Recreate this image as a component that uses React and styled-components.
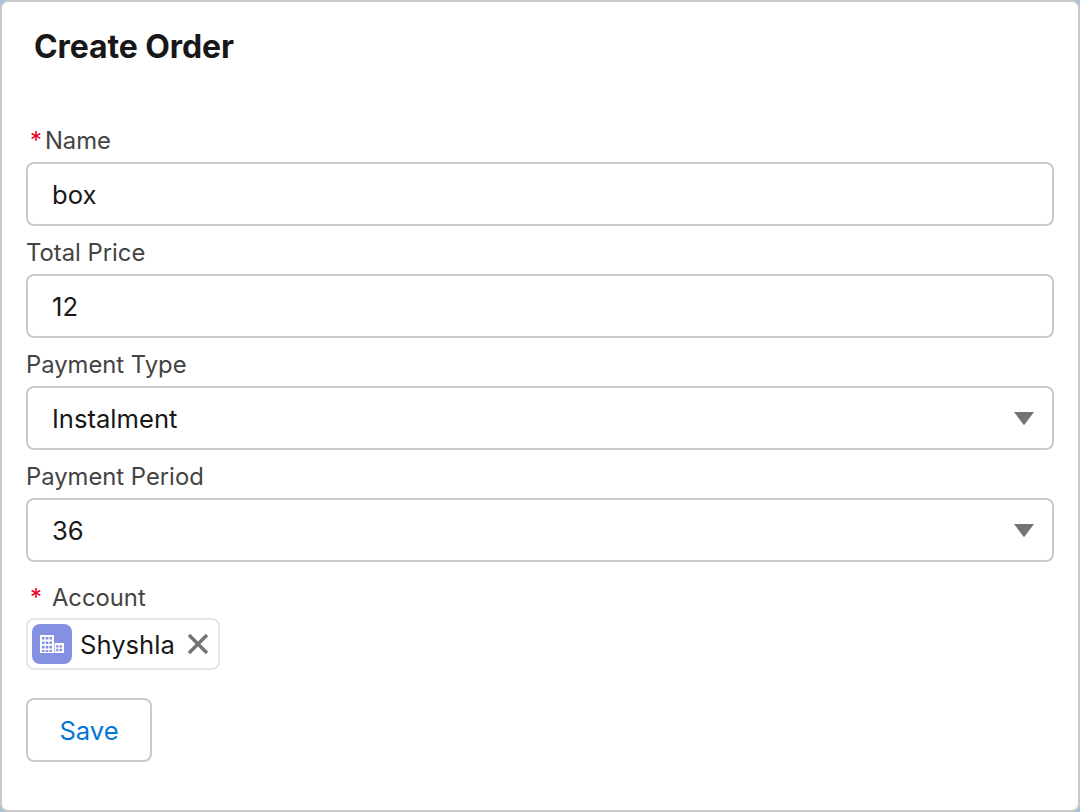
import React from 'react'
import styled, { createGlobalStyle } from 'styled-components'

const GlobalStyle = createGlobalStyle`
  html, body {
    margin: 0;
    padding: 0;
    background: #a9bfdc;
  }
  body {
    font-family: Inter, "Liberation Sans", sans-serif;
  }
`

const Card = styled.form`
  box-sizing: border-box;
  width: 1080px;
  height: 812px;
  padding: 0 24px;
  background: #fff;
  border: 2px solid #c9c9c9;
  border-radius: 8px;
  display: flex;
  flex-direction: column;
`

const Title = styled.h1`
  margin: 26px 0 0 8px;
  height: 38px;
  font-size: 32px;
  line-height: 38px;
  font-weight: 700;
  letter-spacing: -0.1px;
  color: #181818;
`

const Fields = styled.div`
  margin-top: 56px;
  display: flex;
  flex-direction: column;
  gap: 8px;
`

const Field = styled.div`
  display: flex;
  flex-direction: column;
  margin-top: ${p => (p.$spaced ? 9 : 0)}px;
`

const Label = styled.label`
  height: 36px;
  margin-bottom: 4px;
  display: flex;
  align-items: center;
  font-size: 23.8px;
  color: #444;
`

const Required = styled.span`
  color: #ea001e;
  margin-left: 4px;
  margin-right: ${p => p.$gap}px;
`

const Control = styled.div`
  box-sizing: border-box;
  height: 64px;
  padding: 0 24px;
  display: flex;
  align-items: center;
  justify-content: space-between;
  border: 2px solid #c9c9c9;
  border-radius: 8px;
  font-size: 25.6px;
  color: #181818;
`

const Caret = styled.svg`
  width: 20px;
  height: 13px;
  margin-right: -6px;
  fill: #747474;
`

const Pill = styled.div`
  box-sizing: border-box;
  align-self: flex-start;
  height: 52px;
  width: 194px;
  margin-top: -1px;
  padding: 0 9px 0 4px;
  display: flex;
  align-items: center;
  border: 2px solid #e5e5e5;
  border-radius: 8px;
  font-size: 25.6px;
  color: #181818;
`

const AccountIcon = styled.span`
  width: 40px;
  height: 40px;
  margin-right: 8px;
  border-radius: 8px;
  background: #8490e1;
  display: flex;
  align-items: center;
  justify-content: center;
  svg {
    width: 26px;
    height: 26px;
    fill: #fff;
  }
`

const Remove = styled.svg`
  width: 22px;
  height: 22px;
  margin-left: auto;
  stroke: #747474;
  stroke-width: 3.4;
`

const SaveButton = styled.button`
  box-sizing: border-box;
  align-self: flex-start;
  width: 126px;
  height: 64px;
  margin-top: 28px;
  padding: 0;
  background: #fff;
  border: 2px solid #c9c9c9;
  border-radius: 8px;
  font-family: inherit;
  font-size: 25.6px;
  color: #0176d3;
`

const fields = [
  { name: 'Name', value: 'box', required: true, gap: 3 },
  { name: 'Total Price', value: '12' },
  { name: 'Payment Type', value: 'Instalment', select: true },
  { name: 'Payment Period', value: '36', select: true },
]

const App = () => (
  <>
    <GlobalStyle />
    <Card onSubmit={e => e.preventDefault()}>
      <Title>Create Order</Title>
      <Fields>
        {fields.map(field => (
          <Field key={field.name}>
            <Label>
              {field.required && <Required $gap={field.gap}>*</Required>}
              {field.name}
            </Label>
            <Control>
              {field.value}
              {field.select && (
                <Caret viewBox="0 0 20 13">
                  <path d="M0 0h20L10.6 12.6a.8.8 0 0 1-1.2 0z" />
                </Caret>
              )}
            </Control>
          </Field>
        ))}
        <Field $spaced>
          <Label>
            <Required $gap={10}>*</Required>
            Account
          </Label>
          <Pill>
            <AccountIcon>
              <svg viewBox="0 0 26 26">
                <path fillRule="evenodd" d="M1 4h14v18H1zM3 6v2.6h2.6V6zm3.7 0v2.6h2.6V6zm3.7 0v2.6H13V6zM3 10.4V13h2.6v-2.6zm3.7 0V13h2.6v-2.6zm3.7 0V13H13v-2.6zM3 14.8v2.6h2.6v-2.6zm3.7 0v2.6h2.6v-2.6zm3.7 0v2.6H13v-2.6zM3 19v2h2.6v-2zm3.7 0v2h2.6v-2zm3.7 0v2H13v-2z" />
                <path fillRule="evenodd" d="M15.6 12H25v10h-9.4zm1.6 2.2v2.4h2.4v-2.4zm3.4 0v2.4H23v-2.4zm-3.4 3.6v2.4h2.4v-2.4zm3.4 0v2.4H23v-2.4z" />
              </svg>
            </AccountIcon>
            Shyshla
            <Remove viewBox="0 0 22 22">
              <path d="M2 2l18 18M20 2L2 20" />
            </Remove>
          </Pill>
        </Field>
      </Fields>
      <SaveButton type="button">Save</SaveButton>
    </Card>
  </>
)

export default App
